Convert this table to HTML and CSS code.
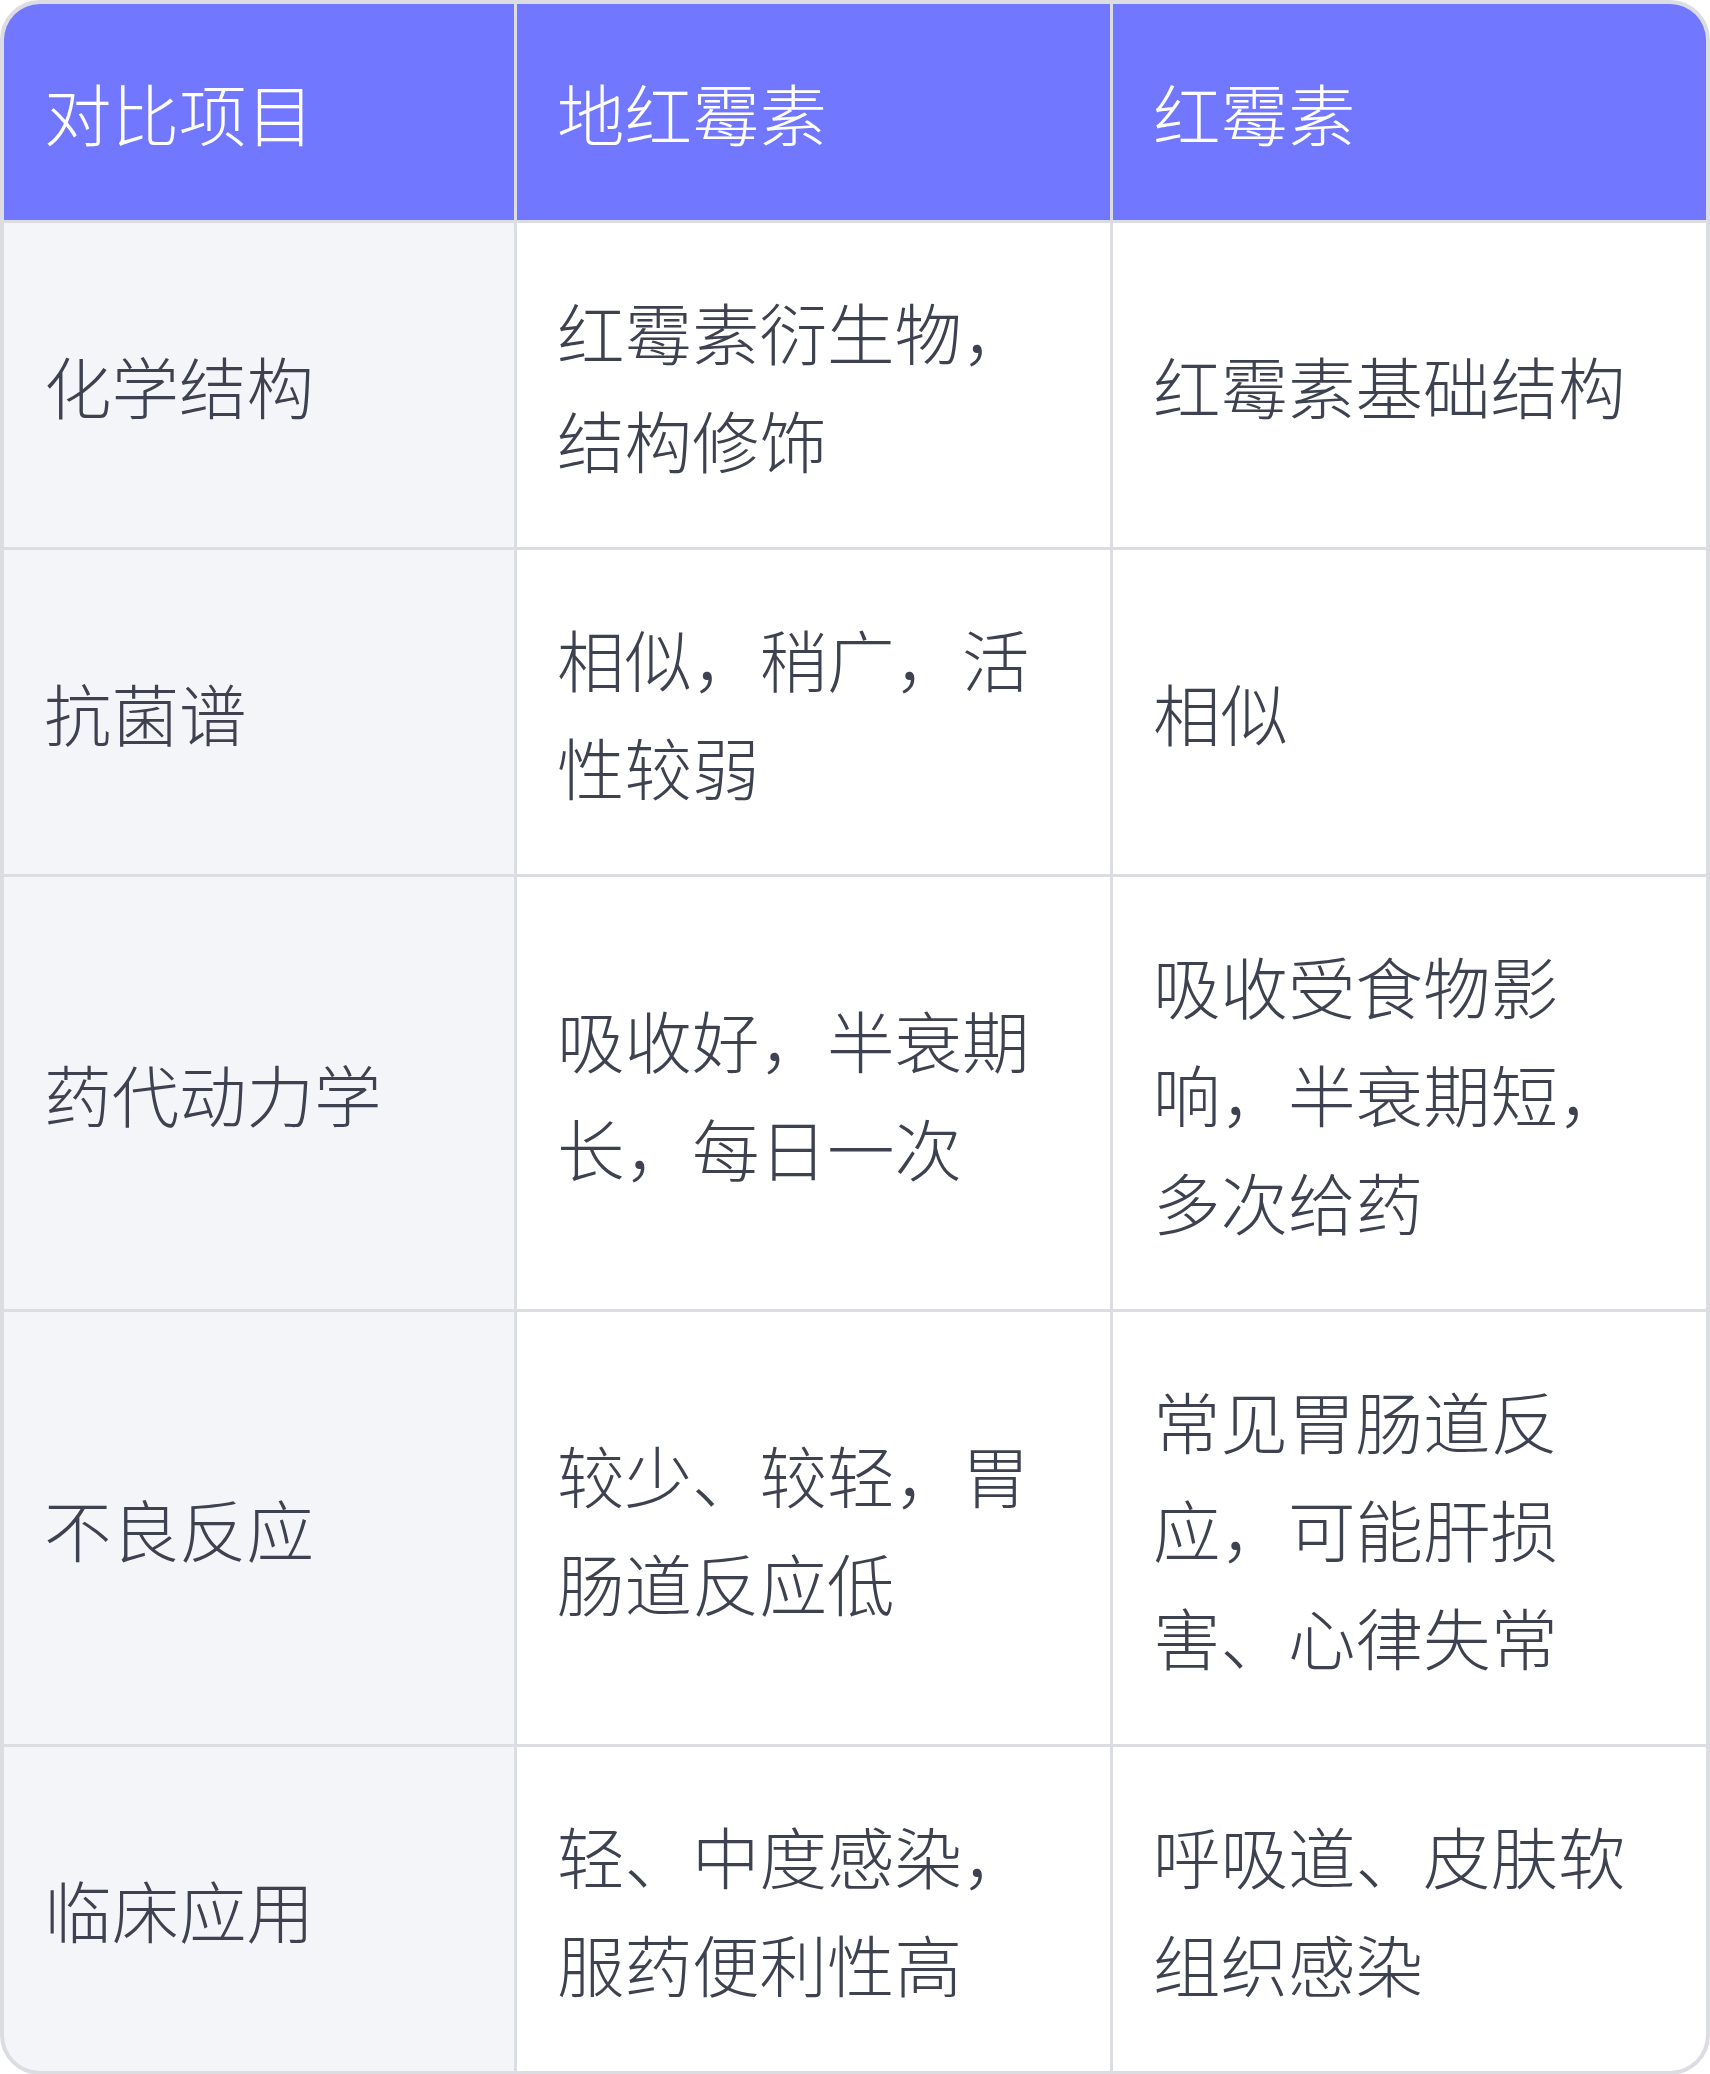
FILE: index.html
```html
<!DOCTYPE html>
<html lang="zh-CN">
<head>
<meta charset="utf-8">
<link rel="stylesheet" href="styles.css">
</head>
<body>
<div class="table">
  <div class="cell head">对比项目</div>
  <div class="cell head">地红霉素</div>
  <div class="cell head">红霉素</div>

  <div class="cell label">化学结构</div>
  <div class="cell">红霉素衍生物，结构修饰</div>
  <div class="cell">红霉素基础结构</div>

  <div class="cell label">抗菌谱</div>
  <div class="cell">相似，稍广，活性较弱</div>
  <div class="cell">相似</div>

  <div class="cell label">药代动力学</div>
  <div class="cell">吸收好，半衰期长，每日一次</div>
  <div class="cell">吸收受食物影响，半衰期短，多次给药</div>

  <div class="cell label">不良反应</div>
  <div class="cell">较少、较轻，胃肠道反应低</div>
  <div class="cell">常见胃肠道反应，可能肝损害、心律失常</div>

  <div class="cell label">临床应用</div>
  <div class="cell">轻、中度感染，服药便利性高</div>
  <div class="cell">呼吸道、皮肤软组织感染</div>
</div>
</body>
</html>
```
FILE: styles.css
```css
html, body {
  margin: 0;
  padding: 0;
  background: #ffffff;
}

.table {
  box-sizing: border-box;
  width: 1710px;
  border: 4px solid #dcdde3;
  border-radius: 40px;
  overflow: hidden;
  display: grid;
  grid-template-columns: 510px 593px 1fr;
  gap: 3px;
  background: #dcdde3;
  font-family: "Noto Sans CJK SC", "Noto Sans", sans-serif;
  font-weight: 300;
  font-size: 67.5px;
  line-height: 108px;
  color: #3e4250;
}

.cell {
  background: #ffffff;
  padding: 54px 40px;
  display: flex;
  align-items: center;
}

.cell.label {
  background: #f4f5f9;
}

.cell.head {
  background: #7177ff;
  color: #ffffff;
}
```
